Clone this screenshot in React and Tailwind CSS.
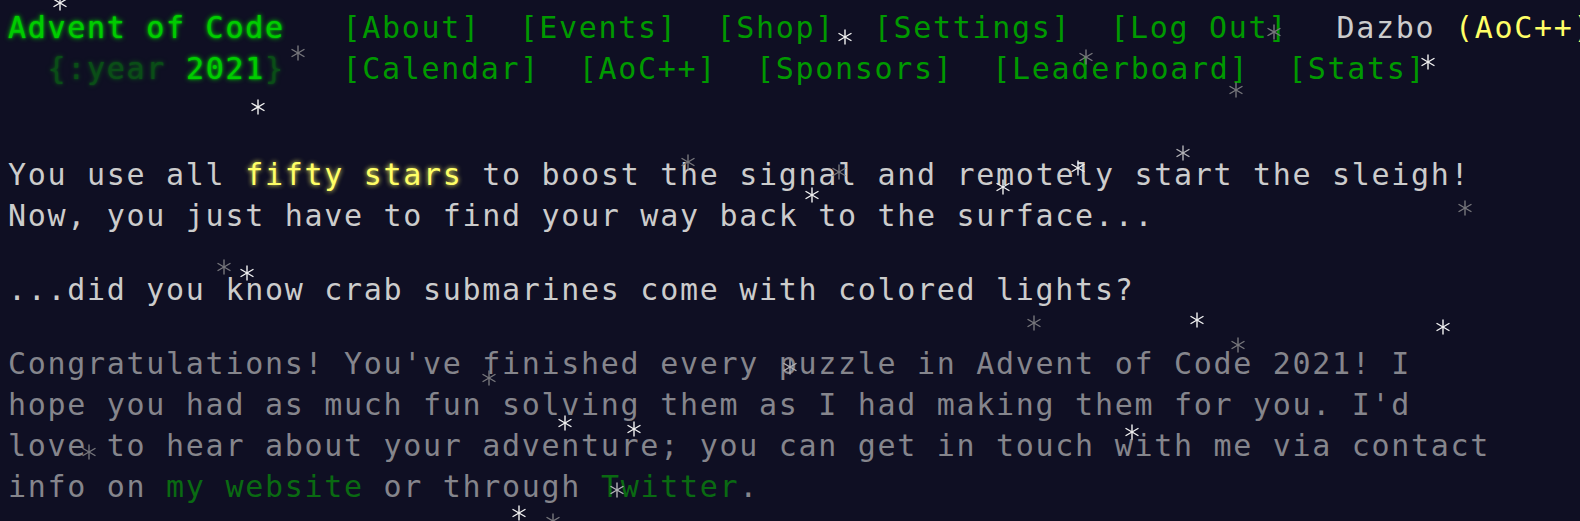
const navTop = ["[About]", "[Events]", "[Shop]", "[Settings]", "[Log Out]"];
const navBottom = ["[Calendar]", "[AoC++]", "[Sponsors]", "[Leaderboard]", "[Stats]"];

// sky stars: centre x, y and tone
const stars = [
  [60, 3, "w"], [298, 53, "g"], [845, 37, "w"], [1274, 32, "g"], [1086, 57, "g"],
  [1428, 62, "w"], [1236, 90, "g"], [258, 107, "w"], [688, 162, "g"], [839, 172, "g"],
  [812, 195, "w"], [1003, 187, "w"], [1078, 168, "w"], [1183, 153, "l"], [1465, 208, "g"],
  [224, 267, "g"], [247, 273, "w"], [1034, 323, "g"], [1197, 320, "w"], [1443, 327, "w"],
  [1238, 345, "g"], [489, 378, "g"], [790, 367, "l"], [565, 423, "w"], [634, 429, "w"],
  [89, 452, "g"], [1132, 432, "w"], [617, 490, "l"], [519, 513, "w"], [553, 521, "g"],
];

const tones = { w: "#f2f2f2", l: "#b4b4b8", g: "#77777c" };

function Star({ x, y, tone }) {
  return (
    <svg
      className="absolute pointer-events-none"
      style={{ left: x - 8, top: y - 8 }}
      width="16"
      height="16"
      viewBox="0 0 16 16"
      stroke={tones[tone]}
      strokeWidth="1.4"
      strokeLinecap="round"
    >
      <line x1="8" y1="1" x2="8" y2="15" />
      <line x1="2" y1="4.5" x2="14" y2="11.5" />
      <line x1="14" y1="4.5" x2="2" y2="11.5" />
    </svg>
  );
}

function Nav({ items }) {
  return (
    <nav>
      <ul className="flex">
        {items.map((t) => (
          <li key={t} className="px-[19.4px]">
            <a className="text-[#009900]">{t}</a>
          </li>
        ))}
      </ul>
    </nav>
  );
}

export default function App() {
  return (
    <div className="relative h-[521px] w-full overflow-hidden bg-[#0f0f23] pl-2 pt-[7px] text-[30px] leading-[41px] tracking-[1.7px] text-[#cccccc] [font-family:'DejaVu_Sans_Mono',monospace]">
      <header className="mb-[65px] whitespace-nowrap">
        <div className="flex">
          <h1 className="w-[315px] shrink-0">
            <a className="text-[#00cc00] [text-shadow:0_0_2px_#00cc00,0_0_5px_#00cc00]">Advent of Code</a>
          </h1>
          <Nav items={navTop} />
          <div className="pl-[29px]">
            Dazbo <span className="text-[#ffff66]">(AoC++)</span>{" "}
            <span className="text-[#ffff66]">50*</span>
          </div>
        </div>
        <div className="flex">
          <h1 className="w-[315px] shrink-0 whitespace-pre">
            {"  "}
            <span className="text-[#00cc00] opacity-[0.33] [text-shadow:0_0_2px_#00cc00,0_0_5px_#00cc00]">{"{:year "}</span>
            <a className="text-[#00cc00] [text-shadow:0_0_2px_#00cc00,0_0_5px_#00cc00]">2021</a>
            <span className="text-[#00cc00] opacity-[0.33] [text-shadow:0_0_2px_#00cc00,0_0_5px_#00cc00]">{"}"}</span>
          </h1>
          <Nav items={navBottom} />
        </div>
      </header>

      <main className="whitespace-nowrap">
        <p className="mb-[33px]">
          You use all{" "}
          <em className="not-italic text-[#ffff66] [text-shadow:0_0_5px_#ffff66]">fifty stars</em> to boost the
          signal and remotely start the sleigh!
          <br />
          Now, you just have to find your way back to the surface...
        </p>
        <p className="mb-[33px]">...did you know crab submarines come with colored lights?</p>
        <p className="text-[#85858c]">
          Congratulations! You've finished every puzzle in Advent of Code 2021! I
          <br />
          hope you had as much fun solving them as I had making them for you. I'd
          <br />
          love to hear about your adventure; you can get in touch with me via contact
          <br />
          info on <a className="text-[#0a6a12]">my website</a> or through{" "}
          <a className="text-[#0a6a12]">Twitter</a>.
        </p>
      </main>

      {stars.map(([x, y, t], i) => (
        <Star key={i} x={x} y={y} tone={t} />
      ))}
    </div>
  );
}
